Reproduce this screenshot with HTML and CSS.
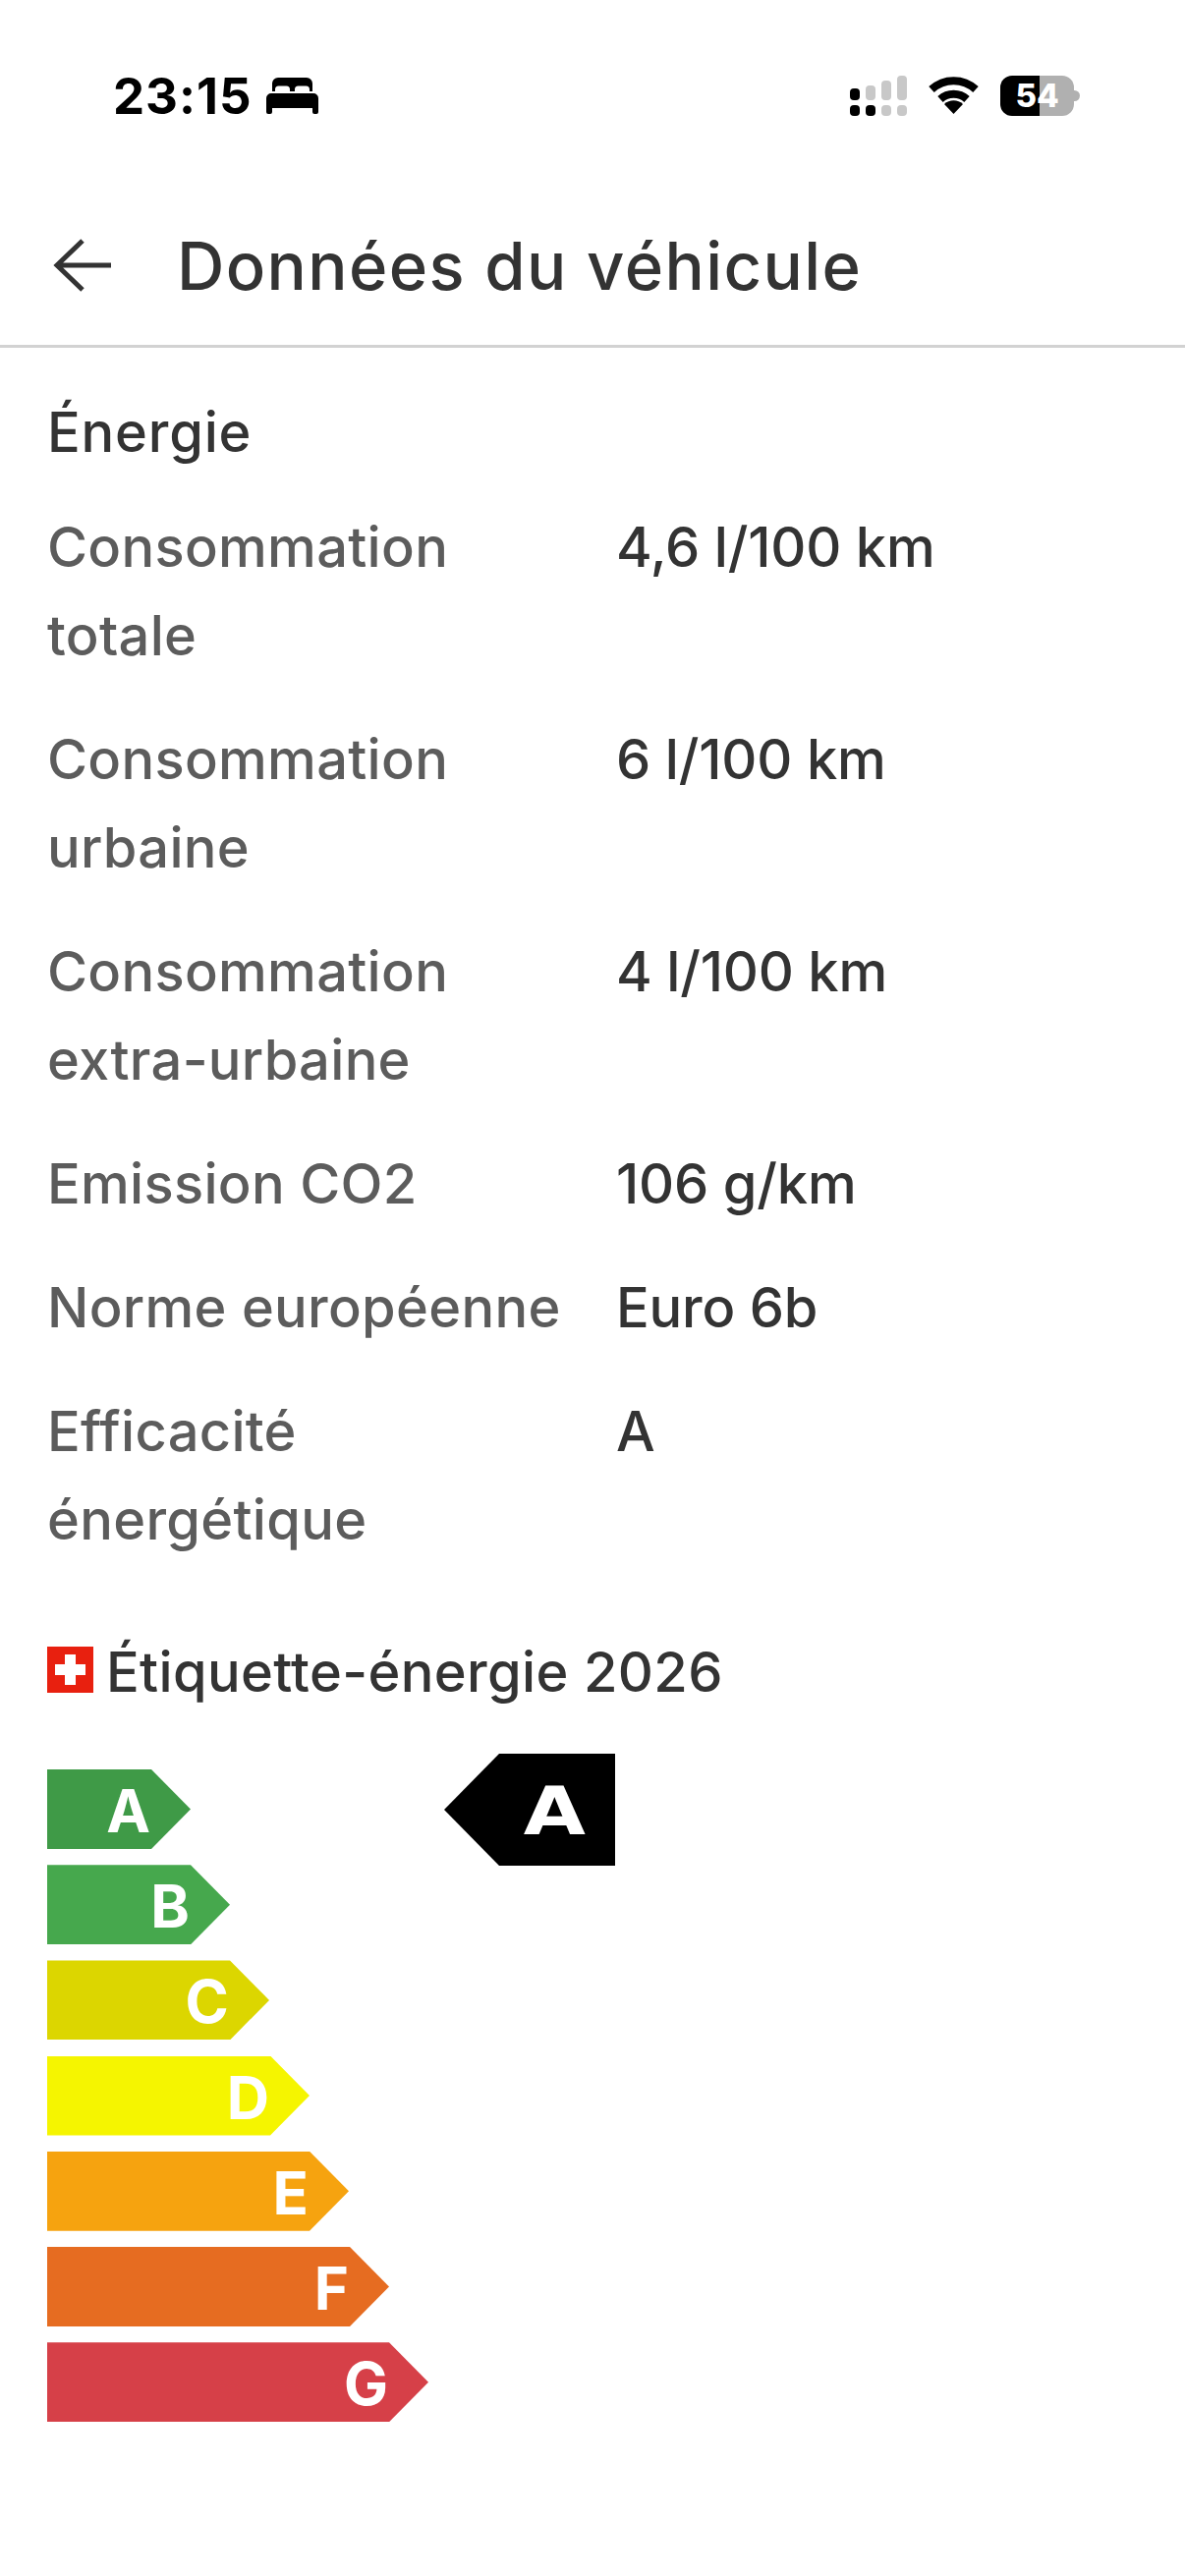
FILE: index.html

```html
<!DOCTYPE html>
<html lang="fr">
<head>
  <meta charset="UTF-8">
  <meta name="viewport" content="width=device-width, initial-scale=1.0">
  <title>Données du véhicule</title>
  <link rel="stylesheet" href="styles.css">
</head>
<body>
  <!-- Status Bar -->
  <div class="status-bar">
    <div class="status-left">
      <span class="time">23:15</span>
      <svg class="bed" viewBox="0 0 53 37"><path d="M6 14V6a6 6 0 0 1 6-6h29a6 6 0 0 1 6 6v8h-3v-2a3.500 3.500 0 0 0-3.500-3.500h-8A3.500 3.500 0 0 0 29 12v2h-5v-2a3.500 3.500 0 0 0-3.500-3.500h-8A3.500 3.500 0 0 0 9 12v2zM5 16h43a5 5 0 0 1 5 5v10H0V21a5 5 0 0 1 5-5zM0 31h6v4a2 2 0 0 1-2 2H2a2 2 0 0 1-2-2zM47 31h6v4a2 2 0 0 1-2 2h-2a2 2 0 0 1-2-2z"/></svg>
    </div>
    <div class="status-right">
      <svg class="signal" viewBox="0 0 58 41">
        <rect class="on" x="0" y="13" width="10" height="12" rx="4"/>
        <rect class="off" x="16" y="10" width="10" height="15" rx="4"/>
        <rect class="off" x="32" y="5" width="10" height="20" rx="4"/>
        <rect class="off" x="48" y="0" width="10" height="25" rx="4"/>
        <rect class="on" x="0" y="30" width="10" height="11" rx="4"/>
        <rect class="on" x="16" y="30" width="10" height="11" rx="4"/>
        <rect class="off" x="32" y="30" width="10" height="11" rx="4"/>
        <rect class="off" x="48" y="30" width="10" height="11" rx="4"/>
      </svg>
      <svg class="wifi" viewBox="0 0 51 38">
        <path class="wifi-band" d="M3 13A33 33 0 0 1 48 13"/>
        <path class="wifi-band" d="M12 23A20 20 0 0 1 39 23"/>
        <path d="M25.500 38L16 28A14 14 0 0 1 35 28Z"/>
      </svg>
      <div class="battery">54</div>
      <div class="battery-nub"></div>
    </div>
  </div>

  <!-- Header -->
  <header class="top-bar">
    <svg class="back" viewBox="0 0 60 54"><path d="M59 27H3M30 2L4 27l26 25"/></svg>
    <h1>Données du véhicule</h1>
  </header>

  <!-- Energy Data -->
  <section class="energy">
    <h2>Énergie</h2>
    <div class="data-grid">
      <div class="label">Consommation totale</div>
      <div class="value">4,6 l/100 km</div>
      <div class="label">Consommation urbaine</div>
      <div class="value">6 l/100 km</div>
      <div class="label">Consommation extra-urbaine</div>
      <div class="value">4 l/100 km</div>
      <div class="label">Emission CO2</div>
      <div class="value">106 g/km</div>
      <div class="label">Norme européenne</div>
      <div class="value">Euro 6b</div>
      <div class="label">Efficacité énergétique</div>
      <div class="value">A</div>
    </div>
  </section>

  <!-- Energy Label -->
  <section class="energy-label">
    <h2 class="label-title">
      <svg class="flag" viewBox="0 0 47 47">
        <rect width="47" height="47" fill="#e8200f"/>
        <path fill="#fff" d="M18 8h11v10h10v11H29v10H18V29H8V18h10z"/>
      </svg>
      Étiquette-énergie 2026
    </h2>
    <div class="label-chart">
      <div class="grades">
        <div class="grade grade-a">A</div>
        <div class="grade grade-b">B</div>
        <div class="grade grade-c">C</div>
        <div class="grade grade-d">D</div>
        <div class="grade grade-e">E</div>
        <div class="grade grade-f">F</div>
        <div class="grade grade-g">G</div>
      </div>
      <div class="current-grade"><span>A</span></div>
    </div>
  </section>
</body>
</html>
```

FILE: styles.css

```css
/* Reset and Basic Styles */
* {
  margin: 0;
  padding: 0;
  box-sizing: border-box;
  font-family: 'Inter', 'Noto Sans', sans-serif;
}

body {
  background-color: #fff;
  color: #333;
  width: 1206px;
  height: 2622px;
  overflow: hidden;
}

/* Status Bar */
.status-bar {
  height: 194px;
  display: flex;
  justify-content: space-between;
  align-items: center;
  padding: 0 107px 0 115px;
}

.status-left {
  display: flex;
  align-items: center;
  gap: 14px;
}

.time {
  font-size: 51px;
  font-weight: 700;
  letter-spacing: 1px;
  line-height: 1;
  color: #000;
}

.bed {
  width: 53px;
  height: 37px;
}

.status-right {
  display: flex;
  align-items: center;
}

.signal {
  width: 58px;
  height: 41px;
  margin-right: 22px;
}

.signal .on {
  fill: #000;
}

.signal .off {
  fill: #c8c8c8;
}

.wifi {
  width: 51px;
  height: 38px;
  margin-right: 22px;
}

.wifi-band {
  fill: none;
  stroke: #000;
  stroke-width: 8;
}

.battery {
  width: 75px;
  height: 41px;
  border-radius: 12px;
  background: linear-gradient(90deg, #000 54%, #b0b0b0 54%);
  color: #fff;
  font-size: 33px;
  font-weight: 800;
  line-height: 41px;
  text-align: center;
}

.battery-nub {
  width: 6px;
  height: 11px;
  background-color: #b0b0b0;
  border-radius: 0 6px 6px 0;
}

/* Header */
.top-bar {
  height: 160px;
  display: flex;
  align-items: center;
  padding-left: 54px;
  padding-bottom: 4px;
  border-bottom: 3px solid #d2d2d2;
}

.back {
  width: 60px;
  height: 54px;
  margin-bottom: 2px;
  fill: none;
  stroke: #333;
  stroke-width: 5;
}

h1 {
  font-size: 67px;
  font-weight: 500;
  letter-spacing: 1.4px;
  line-height: 80px;
  margin-left: 66px;
  color: #333;
}

/* Energy Data */
.energy {
  padding: 41px 48px 0;
}

h2 {
  font-size: 56px;
  font-weight: 500;
  letter-spacing: 0.8px;
  line-height: 90px;
  color: #333;
}

.data-grid {
  display: grid;
  grid-template-columns: 579px 1fr;
  row-gap: 36px;
  margin-top: 27px;
  font-size: 56px;
  line-height: 90px;
}

.label {
  color: #5c5c5c;
  font-weight: 500;
  letter-spacing: 0.3px;
  padding-right: 30px;
}

.value {
  color: #333;
  font-weight: 500;
  letter-spacing: -0.2px;
}

/* Energy Label */
.energy-label {
  padding: 0 48px;
  margin-top: 65px;
}

.label-title {
  display: flex;
  align-items: center;
  gap: 13px;
  letter-spacing: 0.35px;
}

.flag {
  width: 47px;
  height: 47px;
  margin-bottom: 5px;
}

.label-chart {
  display: flex;
  margin-top: 54px;
}

.grades {
  display: flex;
  flex-direction: column;
  gap: 16.2px;
  width: 404px;
}

.grade {
  height: 81px;
  padding-right: 41px;
  color: #fff;
  font-size: 60px;
  font-weight: 700;
  line-height: 84px;
  text-align: right;
  clip-path: polygon(0 0, calc(100% - 40px) 0, 100% 50%, calc(100% - 40px) 100%, 0 100%);
}

.grade-a { width: 146px; background-color: #3f9a47; }
.grade-b { width: 186px; background-color: #46a84d; }
.grade-c { width: 226px; background-color: #dcd600; }
.grade-d { width: 267px; background-color: #f5f500; }
.grade-e { width: 307px; background-color: #f6a30f; }
.grade-f { width: 348px; background-color: #e66c21; }
.grade-g { width: 388px; background-color: #d64048; }

.current-grade {
  width: 174px;
  height: 114px;
  margin-top: -16px;
  padding-left: 86px;
  background-color: #000;
  color: #fff;
  font-size: 68px;
  font-weight: 800;
  line-height: 114px;
  clip-path: polygon(56px 0, 100% 0, 100% 100%, 56px 100%, 0 50%);
}

.current-grade span {
  display: inline-block;
  font-family: 'DejaVu Sans', sans-serif;
  font-weight: 700;
  transform: scaleX(1.2);
}
```
